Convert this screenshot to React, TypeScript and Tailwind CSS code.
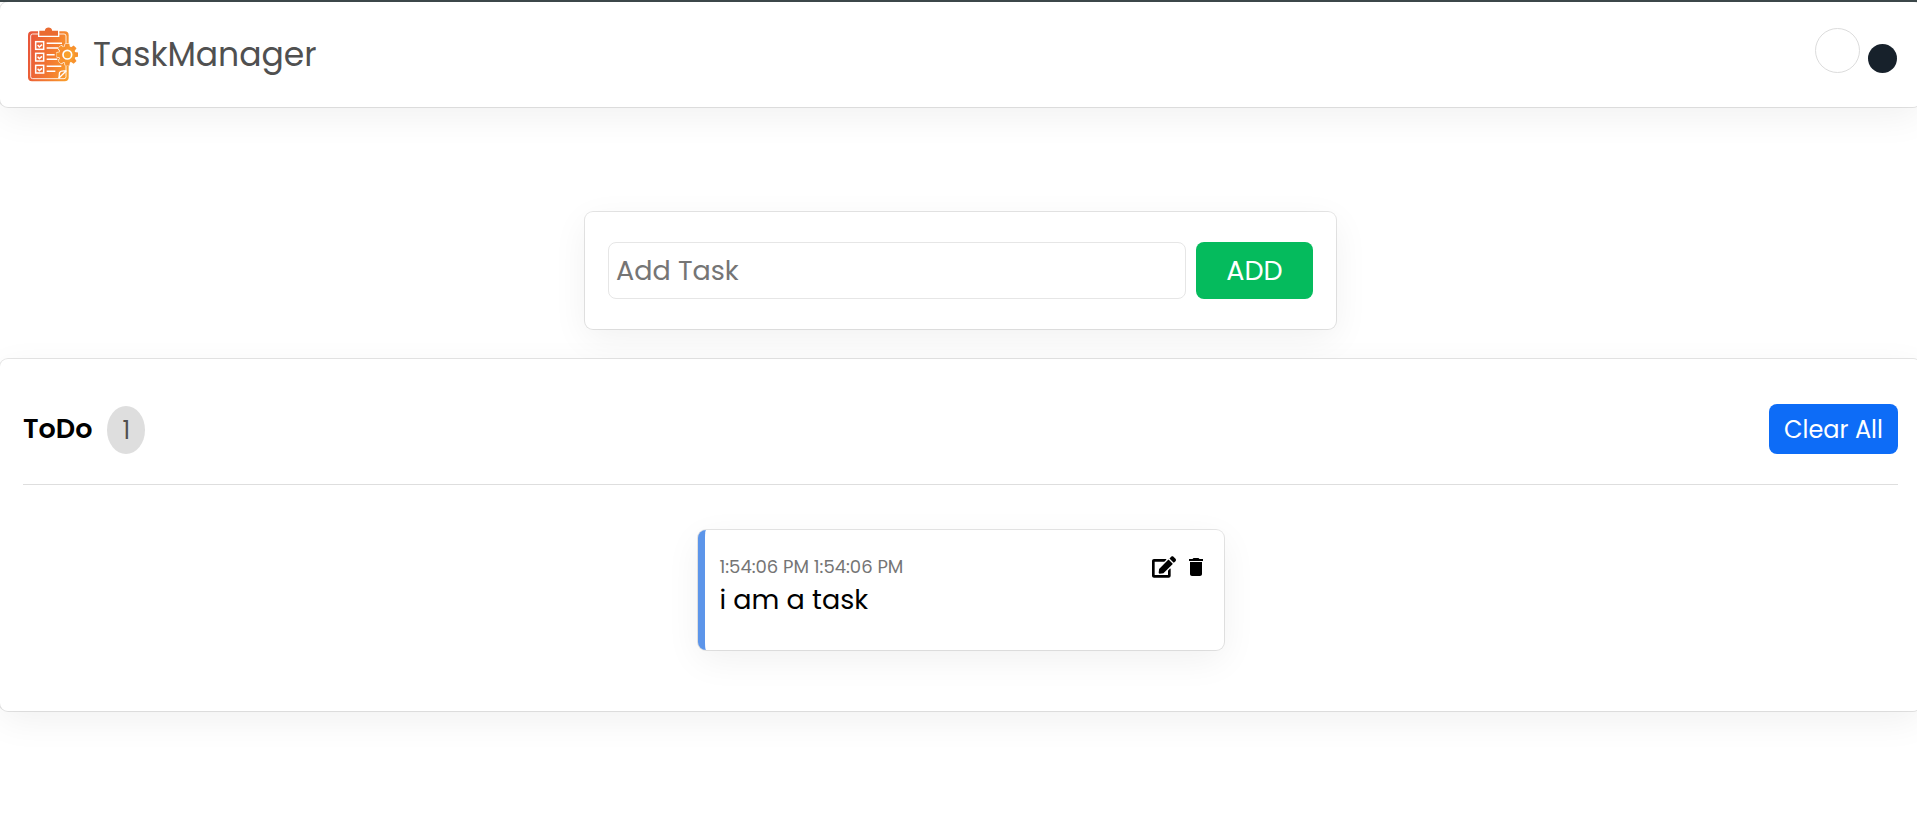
import { useState } from "react";
import type { FormEvent } from "react";
import { FaEdit } from "react-icons/fa";
import { MdDelete } from "react-icons/md";

type Task = { id: number; title: string; time: string };

const PANEL =
  "rounded-lg bg-white shadow-[0_10px_36px_rgba(0,0,0,0.06),0_0_0_1px_rgba(0,0,0,0.1)]";

const TEETH = [0, 45, 90, 135, 180, 225, 270, 315];

function Logo() {
  return (
    <svg viewBox="24 24 150 165" className="h-[55px] w-[50px]" aria-hidden="true">
      <defs>
        <linearGradient id="logo" gradientUnits="userSpaceOnUse" x1="24" y1="90" x2="174" y2="120">
          <stop offset="0" stopColor="#e9573a" />
          <stop offset="0.55" stopColor="#f47f2f" />
          <stop offset="1" stopColor="#fbab2c" />
        </linearGradient>
      </defs>
      <rect x="24" y="37" width="122" height="150" rx="12" fill="url(#logo)" />
      <rect x="32" y="45" width="106" height="134" rx="6" fill="none" stroke="#fff" strokeOpacity="0.85" strokeWidth="3" />
      <path d="M56 33h17c2-13 23-13 25 0h18v19H56z" fill="#ea6a30" stroke="#fff" strokeWidth="4" />
      <g fill="none" stroke="#fff" strokeWidth="4.5">
        {[68, 103, 139].map((y) => (
          <g key={y}>
            <rect x="47" y={y} width="24" height="23" />
            <path d={`M53 ${y + 10}l5 6 8-7`} />
          </g>
        ))}
        <path d="M80 73h46M80 87h34M80 107h24M80 121h32M80 142h44M80 157h26" />
      </g>
      <path d="M116 178c3-6 1-14 3-18 4-6 14-3 20-5z" fill="#f58f2c" stroke="#fff" strokeWidth="4" />
      <g stroke="#fff" strokeWidth="6">
        <circle cx="142" cy="107" r="23" />
        {TEETH.map((a) => (
          <rect key={a} x="136" y="76" width="12" height="14" rx="2" transform={`rotate(${a} 142 107)`} />
        ))}
      </g>
      <g fill="url(#logo)">
        <circle cx="142" cy="107" r="25" />
        {TEETH.map((a) => (
          <path key={a} d="M134 86l2-12h12l2 12z" transform={`rotate(${a} 142 107)`} />
        ))}
      </g>
      <circle cx="142" cy="107" r="13" fill="#f9a02c" stroke="#fff" strokeWidth="5" />
    </svg>
  );
}

export default function App() {
  const [tasks, setTasks] = useState<Task[]>([
    { id: 1, title: "i am a task", time: "1:54:06 PM 1:54:06 PM" },
  ]);
  const [draft, setDraft] = useState("");

  const addTask = (e: FormEvent) => {
    e.preventDefault();
    if (!draft.trim()) return;
    const now = new Date().toLocaleTimeString("en-US");
    setTasks([...tasks, { id: Date.now(), title: draft, time: `${now} ${now}` }]);
    setDraft("");
  };

  return (
    <div className="min-h-screen overflow-hidden border-t-2 border-[#3c474a] bg-white font-['Poppins','Inter',sans-serif] text-black">
      <div className="-mr-1">
        <header className={`${PANEL} flex h-[105px] items-center justify-between px-6`}>
          <a href="#" className="flex items-center gap-[15px] pl-1 text-[#505050]">
            <Logo />
            <span className="text-[33px]">TaskManager</span>
          </a>
          <div className="flex items-end gap-2 pb-2">
            <button type="button" aria-label="Light theme" className="size-[45px] rounded-full border border-[#dcdcdc] bg-white" />
            <button type="button" aria-label="Dark theme" className="size-[29px] rounded-full bg-[#17212b]" />
          </div>
        </header>

        <main>
          <form
            onSubmit={addTask}
            className={`${PANEL} mx-auto mt-[105px] flex max-w-[751px] gap-2.5 px-[23px] py-[30px]`}
          >
            <input
              type="text"
              aria-label="Add Task"
              placeholder="Add Task"
              value={draft}
              onChange={(e) => setDraft(e.target.value)}
              className="h-[57px] min-w-0 flex-1 rounded-lg border border-[#e6e6e6] px-[7px] text-[27px] outline-none placeholder:text-[#757575]"
            />
            <button type="submit" className="h-[57px] w-[117px] rounded-lg bg-[#05bb5d] pt-0.5 text-[27px] text-white">
              ADD
            </button>
          </form>

          <section className={`${PANEL} mt-[30px] px-[23px] pt-[45px] pb-[61px]`}>
            <div className="flex items-end justify-between border-b border-[#dedede] pb-[30px]">
              <div className="flex items-center gap-[15px]">
                <h2 className="pb-0.5 text-[27px] font-semibold">ToDo</h2>
                <span className="flex h-12 w-[38px] items-center justify-center rounded-[50%] bg-[#dedede] pt-0.5 text-2xl text-[#505050]">
                  {tasks.length}
                </span>
              </div>
              <button
                type="button"
                onClick={() => setTasks([])}
                className="h-[50px] w-[129px] rounded-lg bg-[#0d6cf7] pt-0.5 text-2xl text-white"
              >
                Clear All
              </button>
            </div>

            <ul className="mx-auto mt-[45px] flex max-w-[526px] flex-col gap-6">
              {tasks.map((task) => (
                <li key={task.id} className={`${PANEL} flex h-[120px] justify-between border-l-[7px] border-[#5c95ea] pt-[25px] pr-4 pl-[15px]`}>
                  <div>
                    <p className="text-lg leading-6 text-[#757575]">{task.time}</p>
                    <h3 className="mt-[3px] text-[27px] leading-9">{task.title}</h3>
                  </div>
                  <div className="flex h-6 gap-2">
                    <button type="button" aria-label="Edit task">
                      <FaEdit size={24} />
                    </button>
                    <button type="button" aria-label="Delete task">
                      <MdDelete size={24} />
                    </button>
                  </div>
                </li>
              ))}
            </ul>
          </section>
        </main>
      </div>
    </div>
  );
}
